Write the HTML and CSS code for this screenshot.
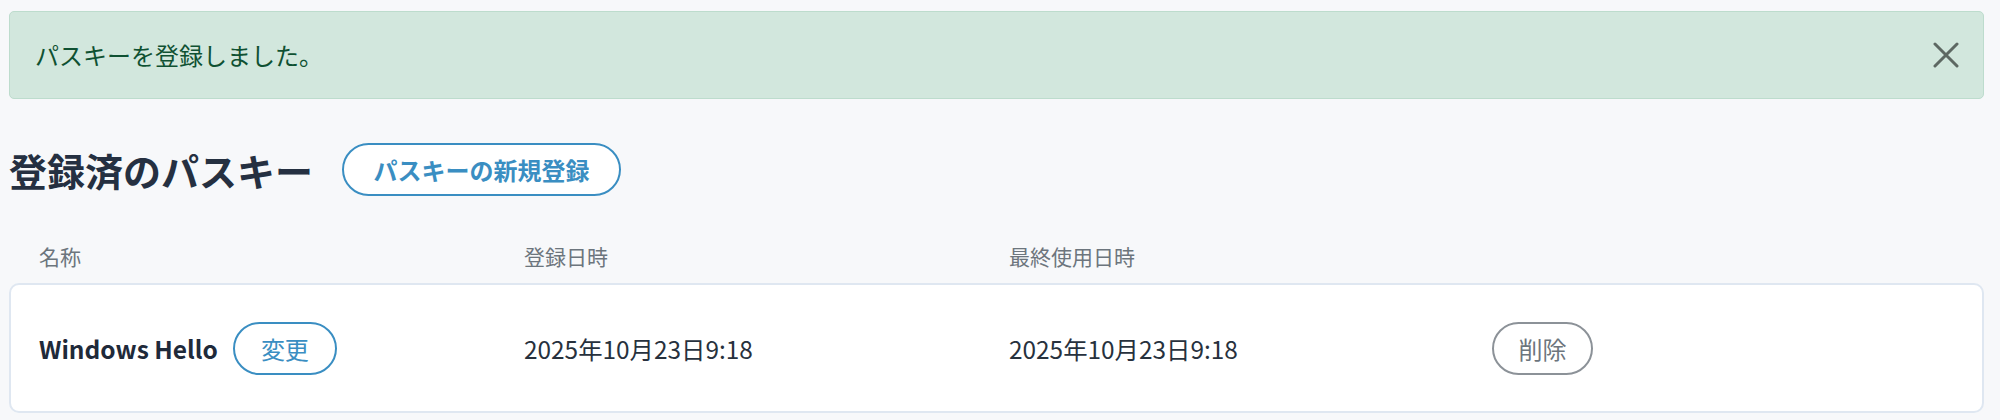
FILE: index.html
```html
<!DOCTYPE html>
<html lang="ja">
<head>
<meta charset="utf-8">
<title>パスキー</title>
<link rel="stylesheet" href="styles.css">
</head>
<body>
<div class="page">
  <div class="alert">
    <span class="alert-text">パスキーを登録しました。</span>
    <button class="alert-close" aria-label="閉じる">
      <svg viewBox="0 0 26 26" width="26" height="26"><path d="M2 2 L24 24 M24 2 L2 24" stroke="currentColor" stroke-width="3" stroke-linecap="round" fill="none"/></svg>
    </button>
  </div>

  <div class="title-row">
    <h2 class="title">登録済のパスキー</h2>
    <button class="btn btn-primary btn-new">パスキーの新規登録</button>
  </div>

  <div class="cols table-head">
    <div>名称</div>
    <div>登録日時</div>
    <div>最終使用日時</div>
    <div></div>
  </div>

  <div class="card">
    <div class="cols row">
      <div class="name-cell">
        <span class="name">Windows Hello</span>
        <button class="btn btn-primary btn-edit">変更</button>
      </div>
      <div class="date">2025年10月23日9:18</div>
      <div class="date">2025年10月23日9:18</div>
      <div><button class="btn btn-gray">削除</button></div>
    </div>
  </div>
</div>
</body>
</html>
```

FILE: styles.css
```css
html, body {
  margin: 0;
  padding: 0;
  background: #f7f8fa;
}
body {
  font-family: "Noto Sans CJK JP", "Noto Sans", sans-serif;
  color: #222b36;
}
.page {
  padding: 11px 16px 0 9px;
}
.alert {
  display: flex;
  align-items: center;
  justify-content: space-between;
  height: 88px;
  box-sizing: border-box;
  background: #d2e7dd;
  border: 1px solid #bddccd;
  border-radius: 5px;
  padding: 0 24px 0 25px;
}
.alert-text {
  font-size: 24px;
  line-height: 32px;
  color: #0f5132;
}
.alert-close {
  border: 0;
  background: none;
  padding: 0;
  width: 26px;
  height: 26px;
  color: #5d6862;
  display: flex;
}
.title-row {
  display: flex;
  align-items: center;
  gap: 29px;
  margin-top: 44px;
  height: 53px;
}
.title {
  margin: 0;
  font-size: 38px;
  line-height: 53px;
  font-weight: 700;
  color: #253041;
}
.btn {
  font-family: inherit;
  background: #fff;
  border-radius: 999px;
  box-sizing: border-box;
  height: 53px;
  cursor: pointer;
}
.btn-primary {
  border: 2px solid #3a8ec2;
  color: #3a8ec2;
}
.btn-new {
  font-size: 24px;
  font-weight: 700;
  padding: 0 29px;
  width: 279px;
}
.cols {
  display: grid;
  grid-template-columns: 485px 485px 483px 1fr;
  align-items: center;
}
.table-head {
  margin-top: 45px;
  padding-left: 30px;
  font-size: 21px;
  line-height: 30px;
  color: #6c757d;
}
.card {
  margin-top: 12px;
  background: #fff;
  border: 2px solid #dfe7f1;
  border-radius: 10px;
  height: 130px;
  box-sizing: border-box;
  padding-left: 28px;
  display: flex;
  align-items: center;
}
.row {
  width: 100%;
}
.name-cell {
  display: flex;
  align-items: center;
  gap: 15px;
}
.name {
  font-size: 24.5px;
  font-weight: 700;
  color: #1f2a3a;
}
.btn-edit {
  font-size: 24px;
  width: 104px;
  padding: 0;
}
.date {
  font-size: 24.4px;
  color: #27313d;
}
.btn-gray {
  border: 2px solid #8c9298;
  color: #6c757d;
  font-size: 24px;
  width: 101px;
  padding: 0;
}
```
